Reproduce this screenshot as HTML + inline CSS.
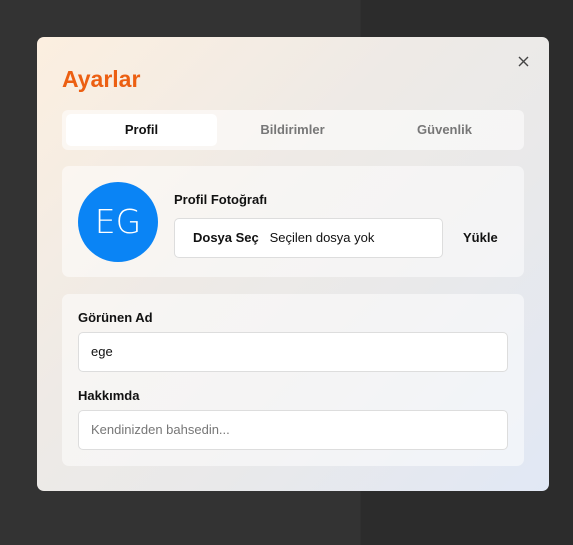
<!DOCTYPE html>
<html><head><style>
*{box-sizing:border-box;margin:0;padding:0}
body{width:573px;height:545px;overflow:hidden;font-family:"Liberation Sans","DejaVu Sans",sans-serif;background:linear-gradient(90deg,#333 0,#333 360px,#2c2c2c 361px);position:relative}
.m{position:absolute;left:37px;top:37px;width:512px;height:454px;border-radius:7px;background:linear-gradient(135deg,#fcefe0 0%,#eeeae6 40%,#e9e9ea 65%,#e1e8f5 100%);}
.x{position:absolute;left:481px;top:19px}
h1{position:absolute;left:25px;top:29px;font-size:23px;color:#ec5f12;font-weight:bold}
.tabs{position:absolute;left:25px;top:73px;width:462px;height:40px;background:rgba(255,255,255,.55);border-radius:6px}
.tab{position:absolute;top:4px;height:32px;width:151px;line-height:32px;text-align:center;font-size:13px;font-weight:bold;color:#777}
.tab.a{background:#fff;color:#111;border-radius:5px;left:4px}
.card{position:absolute;left:25px;width:462px;background:rgba(255,255,255,.5);border-radius:7px}
.av{position:absolute;left:16px;top:16px;width:80px;height:80px;border-radius:50%;background:#0a84f5;color:#fff;font-size:33px;line-height:80px;text-align:center;font-family:"DejaVu Sans",sans-serif;font-weight:200}
.lbl{position:absolute;font-size:13px;font-weight:bold;color:#111}
.in{position:absolute;background:#fff;border:1px solid #ddd;border-radius:5px;font-size:13px;color:#111}
</style></head><body>
<div class="m">
<svg class="x" width="11" height="11" viewBox="0 0 11 11"><path d="M1 1L10 10M10 1L1 10" stroke="#444" stroke-width="1.4"/></svg>
<h1>Ayarlar</h1>
<div class="tabs"><div class="tab a">Profil</div><div class="tab" style="left:155px">Bildirimler</div><div class="tab" style="left:307px">Güvenlik</div></div>
<div class="card" style="top:129px;height:111px">
<div class="av">EG</div>
<div class="lbl" style="left:112px;top:26px">Profil Fotoğrafı</div>
<div class="in" style="left:112px;top:52px;width:269px;height:40px;line-height:38px;padding-left:18px"><b>Dosya Seç</b>&nbsp;&nbsp; Seçilen dosya yok</div>
<div class="lbl" style="left:401px;top:64px">Yükle</div>
</div>
<div class="card" style="top:257px;height:172px">
<div class="lbl" style="left:16px;top:16px">Görünen Ad</div>
<div class="in" style="left:16px;top:38px;width:430px;height:40px;line-height:38px;padding-left:12px">ege</div>
<div class="lbl" style="left:16px;top:94px">Hakkımda</div>
<div class="in" style="left:16px;top:116px;width:430px;height:40px;line-height:38px;padding-left:12px;color:#777">Kendinizden bahsedin...</div>
</div>
</div>
</body></html>
